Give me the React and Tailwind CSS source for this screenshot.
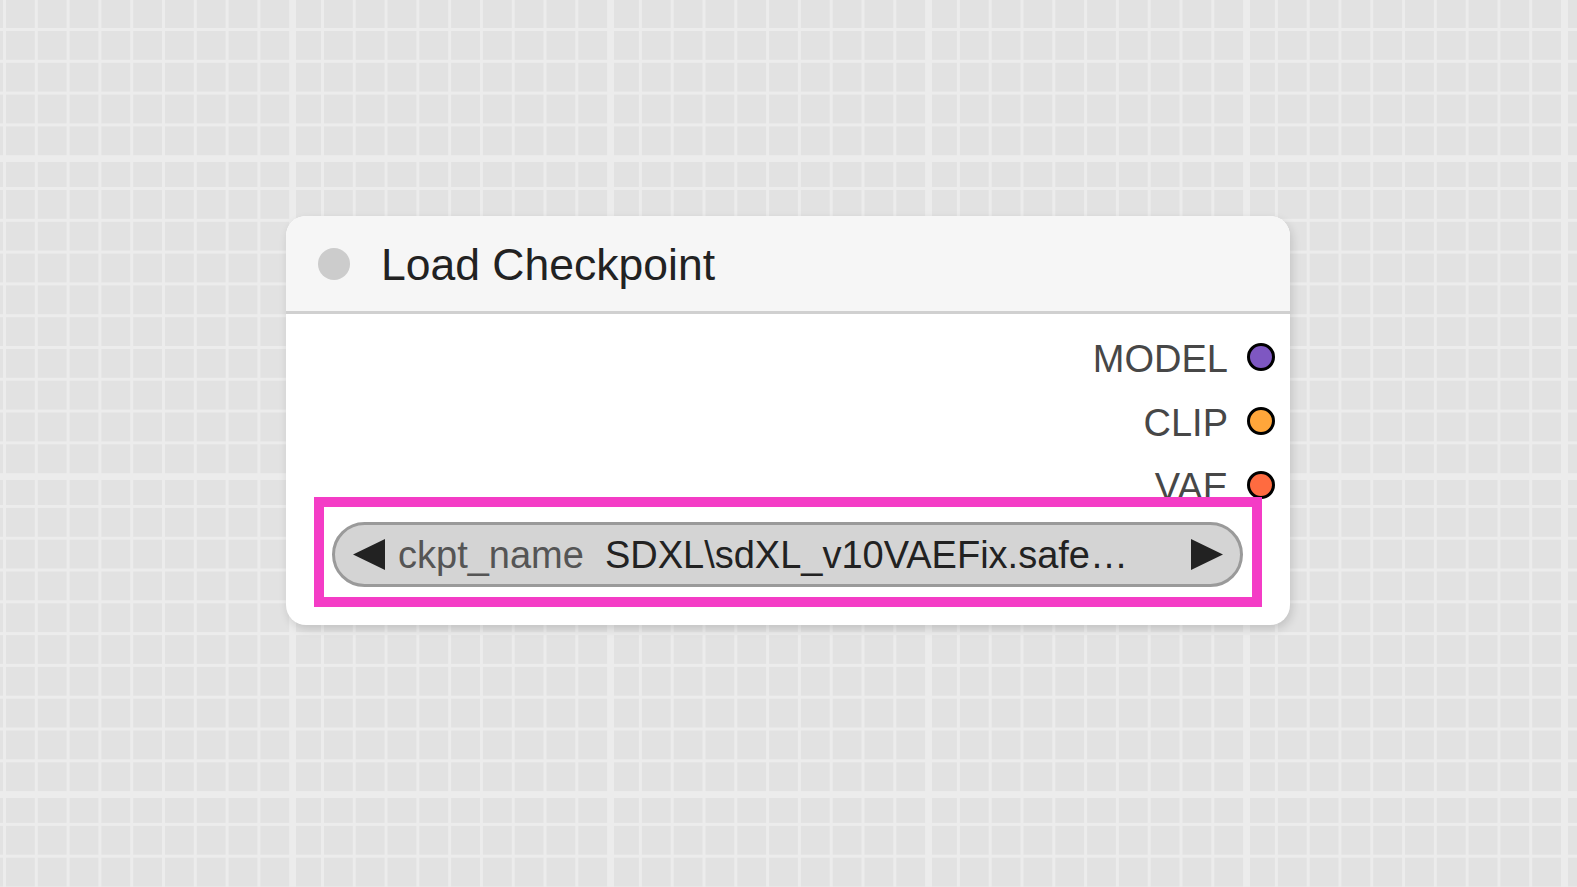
export default function App() {
  const outputs = [
    { name: "MODEL", color: "bg-[#7e57c2]" },
    { name: "CLIP", color: "bg-[#ffa63a]" },
    { name: "VAE", color: "bg-[#ff6b40]" },
  ];
  return (
    <div className="w-full h-screen overflow-hidden bg-[#e2e2e2] [background-image:linear-gradient(to_right,#ececec_3px,transparent_3px),linear-gradient(to_bottom,#ececec_3px,transparent_3px),linear-gradient(to_right,#ececec_6px,transparent_6px),linear-gradient(to_bottom,#ececec_6px,transparent_6px)] [background-size:31.8px_100%,100%_31.8px,318px_100%,100%_318px] [background-position:3px_0,0_28px,290px_0,0_156px] font-['Liberation_Sans',Arial,sans-serif] pt-[216px] pl-[286px]">
      <div className="w-[1004px] rounded-[20px] bg-white shadow-[2px_4px_10px_rgba(0,0,0,0.14)] overflow-hidden">
        <div className="h-[98px] bg-[#f6f6f6] border-b-[3px] border-[#d0d0d0] flex items-center pl-[32px]">
          <div className="w-[32px] h-[32px] rounded-full bg-[#cccccc]" />
          <div className="ml-[31px] pt-[3px] text-[44.5px] leading-none text-[#222]">Load Checkpoint</div>
        </div>
        <div className="pt-[11px] pb-[18px]">
          {outputs.map((o) => (
            <div key={o.name} className="h-[64px] flex items-center justify-end pr-[15px]">
              <span className="pt-[3px] text-[38px] leading-none text-[#474747]">{o.name}</span>
              <span className={`ml-[19px] w-[28px] h-[28px] rounded-full border-[3px] border-black ${o.color}`} />
            </div>
          ))}
          <div className="relative -mt-[20px] mx-[28px] border-[10px] border-[#f43cc6] bg-white pl-[8px] pr-[9px] pt-[15px] pb-[10px]">
            <div className="h-[65px] rounded-full border-[3px] border-[#9a9a9a] bg-[#d4d4d4] flex items-center pl-[18px] pr-[17px]">
              <svg width="32" height="31" viewBox="0 0 32 31" className="shrink-0">
                <polygon points="0,15.5 32,0 32,31" fill="#222" />
              </svg>
              <span className="ml-[13px] text-[38px] leading-none text-[#555]">ckpt_name</span>
              <span className="ml-[21px] text-[38px] leading-none text-[#222] whitespace-nowrap">SDXL\sdXL_v10VAEFix.safe…</span>
              <div className="flex-1" />
              <svg width="32" height="31" viewBox="0 0 32 31" className="shrink-0">
                <polygon points="32,15.5 0,0 0,31" fill="#222" />
              </svg>
            </div>
          </div>
        </div>
      </div>
    </div>
  );
}
